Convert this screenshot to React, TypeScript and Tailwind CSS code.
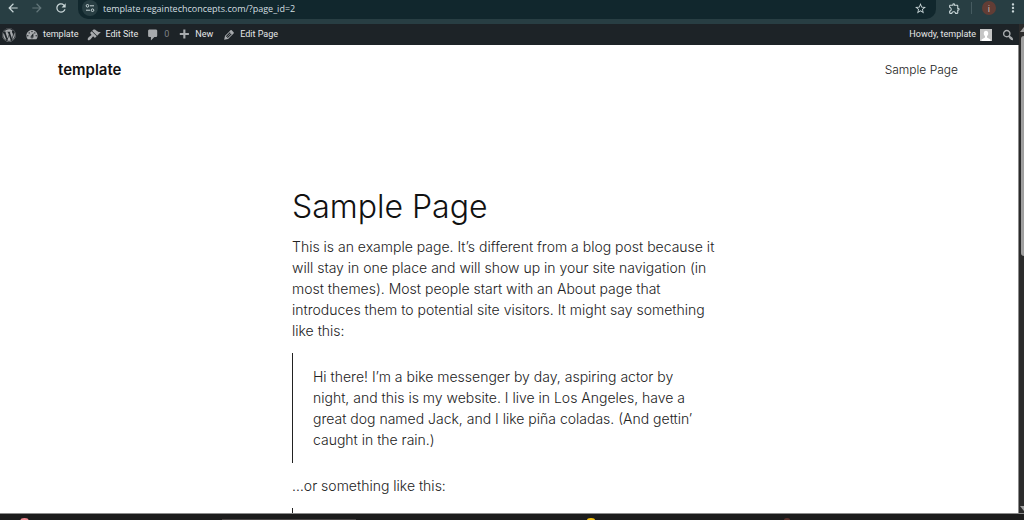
import React from 'react';
import { FaWordpress } from 'react-icons/fa';
import {
  MdArrowBack,
  MdArrowForward,
  MdMoreVert,
  MdOutlineExtension,
  MdRefresh,
  MdStarBorder,
} from 'react-icons/md';

const ICONS = {
  dashboard:
    'M3.76 16h12.48c1.1-1.37 1.76-3.11 1.76-5 0-4.42-3.58-8-8-8s-8 3.58-8 8c0 1.89.66 3.63 1.76 5zM10 4c.55 0 1 .45 1 1s-.45 1-1 1-1-.45-1-1 .45-1 1-1zM6 6c.55 0 1 .45 1 1s-.45 1-1 1-1-.45-1-1 .45-1 1-1zm8 0c.55 0 1 .45 1 1s-.45 1-1 1-1-.45-1-1 .45-1 1-1zm-5.37 5.55L12 7v6c0 1.1-.9 2-2 2s-2-.9-2-2c0-.57.24-1.08.63-1.45zM4 10c.55 0 1 .45 1 1s-.45 1-1 1-1-.45-1-1 .45-1 1-1zm12 0c.55 0 1 .45 1 1s-.45 1-1 1-1-.45-1-1 .45-1 1-1zm-5 3c0-.55-.45-1-1-1s-1 .45-1 1 .45 1 1 1 1-.45 1-1z',
  brush:
    'M14.48 11.06L7.41 3.99l1.5-1.5c.5-.56 2.3-.47 3.51.32 1.21.8 1.43 1.28 2.91 2.1 1.18.64 2.45 1.26 4.45.85zm-.71.71L6.7 4.7 4.93 6.47c-.39.39-.39 1.02 0 1.41l1.06 1.06c.39.39.39 1.03 0 1.42-.6.6-1.43 1.11-2.21 1.69-.35.26-.7.53-1.01.84C1.43 14.23.4 16.08 1.4 17.07c.99 1 2.84-.03 4.18-1.36.31-.31.58-.66.85-1.02.57-.78 1.08-1.61 1.69-2.21.39-.39 1.02-.39 1.41 0l1.06 1.06c.39.39 1.02.39 1.41 0z',
  comment:
    'M5 2h9c1.1 0 2 .9 2 2v7c0 1.1-.9 2-2 2h-2l-5 5v-5H5c-1.1 0-2-.9-2-2V4c0-1.1.9-2 2-2z',
  plus: 'M17 7v3h-5v5H9v-5H4V7h5V2h3v5z',
  pencil:
    'M13.89 3.39l2.71 2.72c.46.46.42 1.24.03 1.64l-8.01 8.02-5.56 1.16 1.16-5.58s7.6-7.63 7.99-8.03c.39-.39 1.22-.39 1.68.07zm-2.73 2.79l-5.59 5.61 1.11 1.11 5.54-5.65zm-2.97 8.23l5.58-5.6-1.07-1.08-5.59 5.6z',
  search:
    'M12.14 4.18c1.87 1.87 2.11 4.75.72 6.89.12.1.22.21.36.31.2.16.47.36.81.59.34.24.56.39.66.47.42.31.73.57.94.78.32.32.6.65.84 1 .25.35.44.69.59 1.04.14.35.21.68.18 1-.02.32-.14.59-.36.81s-.49.34-.81.36c-.31.02-.65-.04-.99-.19-.35-.14-.7-.34-1.04-.59-.35-.24-.68-.52-1-.84-.21-.21-.47-.52-.77-.93-.1-.13-.25-.35-.47-.66-.22-.32-.4-.57-.56-.78-.16-.2-.29-.35-.44-.5-2.07 1.09-4.69.76-6.44-.98-2.14-2.15-2.14-5.64 0-7.78 2.15-2.15 5.63-2.15 7.78 0zm-1.41 6.36c1.36-1.37 1.36-3.58 0-4.95-1.37-1.37-3.59-1.37-4.95 0-1.37 1.37-1.37 3.58 0 4.95 1.36 1.37 3.58 1.37 4.95 0z',
};

interface AdminIconProps {
  name: keyof typeof ICONS;
}

function AdminIcon({ name }: AdminIconProps) {
  return (
    <svg viewBox="0 0 20 20" className="size-[14px] shrink-0 fill-[#a7aaad]" aria-hidden="true">
      <path d={ICONS[name]} />
    </svg>
  );
}

function BrowserBar() {
  return (
    <div className="flex h-6 shrink-0 items-start bg-[#283e43] pr-1 pl-[6px] text-[#c9d6d8]">
      <div className="flex h-4 items-center gap-[10px]">
        <button aria-label="Back">
          <MdArrowBack size={14} />
        </button>
        <button aria-label="Forward" className="text-[#64777b]">
          <MdArrowForward size={14} />
        </button>
        <button aria-label="Reload">
          <MdRefresh size={14} />
        </button>
      </div>

      <div className="ml-[10px] flex h-[19px] flex-1 items-start rounded-b-[10px] bg-[#11272d] pr-[9px] pl-1">
        <button
          aria-label="View site information"
          className="flex size-4 items-center justify-center rounded-full bg-[#283e43]"
        >
          <svg viewBox="0 0 10 10" className="size-[10px] fill-none stroke-current" aria-hidden="true">
            <circle cx="2.5" cy="2.8" r="1.3" />
            <path d="M5 2.8h4M1 7.2h4" />
            <circle cx="7.5" cy="7.2" r="1.3" />
          </svg>
        </button>
        <input
          aria-label="Address"
          defaultValue="template.regaintechconcepts.com/?page_id=2"
          className="ml-[5px] h-4 flex-1 bg-transparent font-['Open_Sans',sans-serif] text-[9px] text-[#d3dfe0] outline-none"
        />
        <button aria-label="Bookmark this page" className="flex h-4 items-center">
          <MdStarBorder size={13} />
        </button>
      </div>

      <div className="ml-3 flex h-4 items-center">
        <button aria-label="Extensions">
          <MdOutlineExtension size={13} />
        </button>
        <span className="mx-[10px] h-3 w-px bg-[#465b60]" />
        <button
          aria-label="Profile"
          className="size-[14px] rounded-full bg-[#623d35] font-['Open_Sans',sans-serif] text-[9px] leading-[13px] text-[#d8c4be]"
        >
          i
        </button>
        <button aria-label="Menu" className="ml-[10px]">
          <MdMoreVert size={14} />
        </button>
      </div>
    </div>
  );
}

function AdminBar() {
  return (
    <nav
      aria-label="Toolbar"
      className="flex h-[21px] shrink-0 items-center bg-[#1d2327] pt-px pr-1 pl-[2px] font-['Roboto',sans-serif] text-[9px] text-[#e6e7e8]"
    >
      <a href="#about" aria-label="About WordPress" className="text-[#a7aaad]">
        <FaWordpress size={14} />
      </a>
      <a href="#site" className="ml-[9px] flex items-center gap-1">
        <AdminIcon name="dashboard" />
        template
      </a>
      <a href="#edit-site" className="ml-[9px] flex items-center gap-1">
        <AdminIcon name="brush" />
        Edit Site
      </a>
      <a href="#comments" aria-label="0 comments" className="ml-2 flex items-center gap-1 text-[#7d8286]">
        <AdminIcon name="comment" />
        0
      </a>
      <a href="#new" className="ml-2 flex items-center gap-1">
        <AdminIcon name="plus" />
        New
      </a>
      <a href="#edit-page" className="ml-[9px] flex items-center gap-1">
        <AdminIcon name="pencil" />
        Edit Page
      </a>
      <a href="#profile" className="ml-auto flex items-center gap-1">
        Howdy, template
        <svg viewBox="0 0 12 12" className="size-3 bg-[#c5c5c5] fill-white" aria-hidden="true">
          <ellipse cx="6" cy="4.5" rx="2.2" ry="2.8" />
          <path d="M1.5 12V10.500L5 8.500V6h2v2.500l3.500 2V12z" />
        </svg>
      </a>
      <button aria-label="Search" className="ml-[9px]">
        <AdminIcon name="search" />
      </button>
    </nav>
  );
}

function PageContent() {
  return (
    <div className="min-h-0 flex-1 overflow-hidden border-r border-[#8c8c8c] bg-white font-['Inter',sans-serif] font-light text-[#222]">
      <header className="flex h-[50px] items-center justify-between pr-[60px] pl-[58px]">
        <a href="#home" className="text-[15px] font-semibold text-[#111]">
          template
        </a>
        <a href="#sample-page" className="text-[12px]">
          Sample Page
        </a>
      </header>

      <main className="mx-auto w-[434px] pt-[89px] text-[14px] leading-[21px]">
        <h1 className="text-[32px] leading-[46px] text-[#111]">Sample Page</h1>
        <p className="mt-[6px]">
          This is an example page. It’s different from a blog post because it
          <br />
          will stay in one place and will show up in your site navigation (in
          <br />
          most themes). Most people start with an About page that
          <br />
          introduces them to potential site visitors. It might say something
          <br />
          like this:
        </p>
        <blockquote className="mt-3 border-l border-[#222] py-[13px] pl-5">
          <p>
            Hi there! I’m a bike messenger by day, aspiring actor by
            <br />
            night, and this is my website. I live in Los Angeles, have a
            <br />
            great dog named Jack, and I like piña coladas. (And gettin’
            <br />
            caught in the rain.)
          </p>
        </blockquote>
        <p className="mt-3">…or something like this:</p>
        <blockquote className="mt-3 h-16 border-l border-[#222]" />
      </main>
    </div>
  );
}

function Scrollbar() {
  return (
    <div className="flex w-[5px] shrink-0 flex-col items-end bg-[#2b2b2b]" aria-hidden="true">
      <svg viewBox="0 0 4 12" className="h-3 w-1 fill-[#9f9f9f]">
        <path d="M0 8L4 3v5z" />
      </svg>
      <div className="h-[220px] w-[3px] rounded-l-sm bg-[#9f9f9f]" />
      <svg viewBox="0 0 4 10" className="mt-auto h-[10px] w-1 fill-[#9f9f9f]">
        <path d="M0 3h4v5z" />
      </svg>
    </div>
  );
}

function Taskbar() {
  return (
    <div className="flex h-[7px] shrink-0 items-end overflow-hidden border-t border-[#8c8c8c] bg-[#1c1c1c]">
      <svg viewBox="0 0 1024 2" preserveAspectRatio="none" className="h-[2px] w-full" aria-hidden="true">
        <rect x="222" y="1" width="134" height="1" fill="#4a4646" />
        <ellipse cx="24.500" cy="2" rx="4" ry="2" fill="#f08a92" />
        <ellipse cx="591" cy="2" rx="4" ry="2" fill="#f5c211" />
        <ellipse cx="787" cy="2" rx="3" ry="2" fill="#5a322c" />
      </svg>
    </div>
  );
}

export default function App() {
  return (
    <div className="flex h-screen flex-col overflow-hidden">
      <BrowserBar />
      <div className="flex min-h-0 flex-1">
        <div className="flex min-w-0 flex-1 flex-col">
          <AdminBar />
          <PageContent />
        </div>
        <Scrollbar />
      </div>
      <Taskbar />
    </div>
  );
}
